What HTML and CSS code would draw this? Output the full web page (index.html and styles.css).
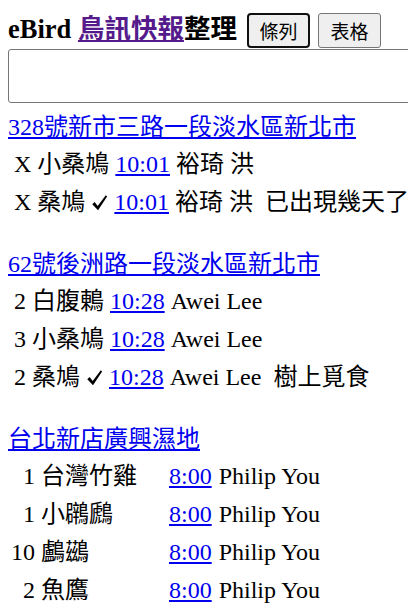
FILE: index.html
```html
<!DOCTYPE html>
<html lang="zh-Hant">
<head>
<meta charset="utf-8">
<title>eBird 鳥訊快報整理</title>
<link rel="stylesheet" href="styles.css">
</head>
<body>
<div class="head">
  <h3 class="title">eBird <a class="visited" href="#">鳥訊快報</a>整理</h3>
  <button class="btn focus">條列</button>
  <button class="btn">表格</button>
</div>
<textarea class="input"></textarea>

<section class="loc">
  <a class="loc-name" href="#">328號新市三路一段淡水區新北市</a>
  <div class="row">&nbsp;X 小桑鳩 <a href="#">10:01</a> 裕琦 洪</div>
  <div class="row">&nbsp;X 桑鳩 <svg class="chk" viewBox="0 0 16 16" aria-label="✓"><path d="M1.2 9.6 L3.4 7.6 L6.3 11.2 L13.9 1.2 L15.2 2.3 L6.6 15.2 Z"/></svg> <a href="#">10:01</a> 裕琦 洪 &nbsp;已出現幾天了</div>
</section>

<section class="loc">
  <a class="loc-name" href="#">62號後洲路一段淡水區新北市</a>
  <div class="row">&nbsp;2 白腹鶇 <a href="#">10:28</a> Awei Lee</div>
  <div class="row">&nbsp;3 小桑鳩 <a href="#">10:28</a> Awei Lee</div>
  <div class="row">&nbsp;2 桑鳩 <svg class="chk" viewBox="0 0 16 16" aria-label="✓"><path d="M1.2 9.6 L3.4 7.6 L6.3 11.2 L13.9 1.2 L15.2 2.3 L6.6 15.2 Z"/></svg> <a href="#">10:28</a> Awei Lee &nbsp;樹上覓食</div>
</section>

<section class="loc">
  <a class="loc-name" href="#">台北新店廣興濕地</a>
  <div class="grid">
    <span class="cnt">1</span><span class="sp">台灣竹雞</span><a href="#">8:00</a><span>Philip You</span>
    <span class="cnt">1</span><span class="sp">小鸊鷉</span><a href="#">8:00</a><span>Philip You</span>
    <span class="cnt">10</span><span class="sp">鸕鷀</span><a href="#">8:00</a><span>Philip You</span>
    <span class="cnt">2</span><span class="sp">魚鷹</span><a href="#">8:00</a><span>Philip You</span>
  </div>
</section>
</body>
</html>
```

FILE: styles.css
```css
html, body {
  overflow: hidden;
}
body {
  margin: 0 8px;
  font-family: "Liberation Serif", "Noto Sans CJK TC", serif;
  font-size: 24px;
  color: #000;
}
a {
  color: #0000ee;
}
a.visited {
  color: #551a8b;
}
.head {
  display: flex;
  align-items: flex-end;
  height: 49px;
  white-space: nowrap;
}
.title {
  margin: 0 10px 5px 0;
  font-size: 26.5px;
  font-weight: bold;
  line-height: 30px;
}
.btn {
  font-family: "Noto Sans CJK TC", sans-serif;
  font-size: 19px;
  line-height: 25px;
  height: 35px;
  width: 63px;
  padding: 0;
  margin: 0 8px 1px 0;
  background: #efefef;
  border: 1px solid #767676;
  border-radius: 3px;
  color: #000;
}
.btn.focus {
  border: 2px solid #101010;
  border-radius: 4px;
}
.input {
  display: block;
  box-sizing: border-box;
  width: 430px;
  height: 54px;
  margin: 0 0 6px;
  border: 1px solid #767676;
  border-radius: 3px;
  resize: none;
}
.loc {
  margin-bottom: 25px;
}
.loc-name {
  display: block;
  width: max-content;
  line-height: 36px;
}
.row {
  line-height: 38px;
  height: 38px;
  white-space: nowrap;
}
.chk {
  width: 17px;
  height: 17px;
  vertical-align: -1px;
  fill: #000;
}
.grid {
  display: grid;
  grid-template-columns: 27px 134px auto auto;
  line-height: 38px;
  width: max-content;
  white-space: nowrap;
}
.cnt {
  text-align: right;
}
.sp {
  margin-left: 6px;
}
.grid a {
  margin-right: 7px;
}
```
